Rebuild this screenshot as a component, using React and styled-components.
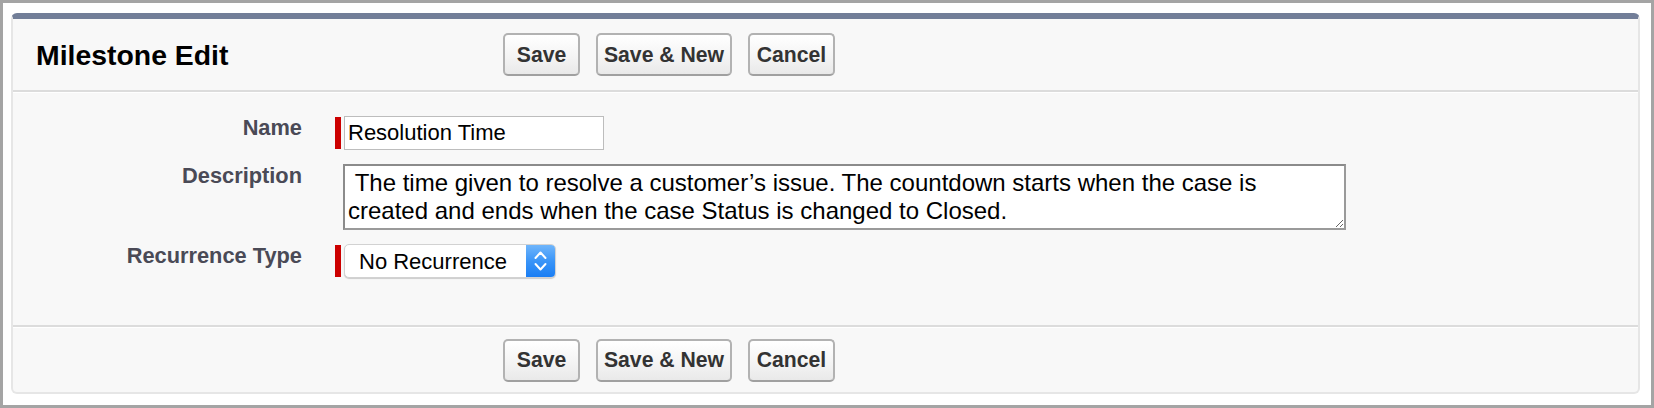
import React from "react";
import styled, { createGlobalStyle } from "styled-components";

const GlobalStyle = createGlobalStyle`
  html, body { margin: 0; padding: 0; background: #fff; }
  body { font-family: "Liberation Sans", Arial, sans-serif; }
  * { box-sizing: border-box; }
`;

const Frame = styled.div`
  width: 1654px;
  height: 408px;
  border: 3px solid #a4a4a4;
  background: #fff;
  padding: 10px 11px 11px 8px;
`;

const Panel = styled.div`
  display: flex;
  flex-direction: column;
  height: 381px;
  background: #f8f8f8;
  border-top: 6px solid #727e98;
  border-left: 2px solid #e6e6e6;
  border-right: 2px solid #e6e6e6;
  border-bottom: 2px solid #e6e6e6;
  border-radius: 6px;
`;

const Header = styled.div`
  display: flex;
  align-items: center;
  height: 73px;
  padding-left: 23px;
  border-bottom: 2px solid #dcdcdc;
`;

const Title = styled.h2`
  margin: 0;
  flex: 0 0 467px;
  font-size: 28.4px;
  font-weight: 700;
  color: #000;
  line-height: 32px;
`;

const ButtonBar = styled.div`
  display: flex;
  align-items: center;
  gap: 16px;
  margin-left: ${(p) => p.$offset || 0}px;
`;

const Button = styled.button`
  width: ${(p) => p.$w}px;
  height: 43px;
  padding: 0;
  border: 2px solid #b2b2b2;
  border-bottom-color: #a0a0a0;
  border-radius: 5px;
  background: linear-gradient(#ffffff, #f3f3f3 60%, #e9e9e9);
  font-family: "Liberation Sans", Arial, sans-serif;
  font-size: 21.2px;
  font-weight: 700;
  color: #333;
  cursor: pointer;
`;

const Body = styled.div`
  display: flex;
  flex-direction: column;
  gap: 14px;
  height: 235px;
  padding-top: 23px;
  border-top: 1px solid #fff;
  border-bottom: 2px solid #dcdcdc;
`;

const FieldRow = styled.div`
  display: flex;
  align-items: flex-start;
`;

const Label = styled.label`
  flex: 0 0 289px;
  font-size: 21.8px;
  font-weight: 700;
  line-height: 24px;
  color: #4a4a56;
  text-align: right;
`;

const Required = styled.span`
  flex: 0 0 6px;
  margin-left: 33px;
  margin-top: 1px;
  height: 32px;
  background: ${(p) => (p.$on ? "#cc0000" : "transparent")};
`;

const TextInput = styled.input`
  width: 260px;
  height: 34px;
  margin-left: 3px;
  padding: 0 3px;
  border: 1px solid #bdbdbd;
  background: #fff;
  font-family: "Liberation Sans", Arial, sans-serif;
  font-size: 22px;
  color: #000;
  outline: none;
`;

const TextArea = styled.textarea`
  width: 1003px;
  height: 66px;
  margin-left: 2px;
  padding: 3px;
  border: 2px solid #8b8b8b;
  border-bottom-color: #9a9a9a;
  border-right-color: #9a9a9a;
  background: #fff;
  font-family: "Liberation Sans", Arial, sans-serif;
  font-size: 24px;
  line-height: 28px;
  color: #000;
  outline: none;
  overflow: hidden;
`;

const SelectBox = styled.div`
  display: flex;
  width: 212px;
  height: 34px;
  margin-left: 3px;
  border-radius: 5px;
  border: 1px solid #d2d2d2;
  box-shadow: 0 1px 1px rgba(0, 0, 0, 0.18);
  background: #fff;
  overflow: hidden;
`;

const NativeSelect = styled.select`
  flex: 1;
  min-width: 0;
  appearance: none;
  -webkit-appearance: none;
  border: none;
  background: transparent;
  padding: 0 0 0 14px;
  font-family: "Liberation Sans", Arial, sans-serif;
  font-size: 22px;
  color: #000;
  outline: none;
`;

const SelectArrow = styled.span`
  display: flex;
  align-items: center;
  justify-content: center;
  width: 29px;
  background: linear-gradient(#6fb5fb, #3a95f8 50%, #1a7ef4);
`;

const Footer = styled.div`
  display: flex;
  align-items: center;
  height: 65px;
  border-top: 1px solid #fff;
`;

function Buttons({ offset }) {
  return (
    <ButtonBar $offset={offset}>
      <Button $w={77}>Save</Button>
      <Button $w={136}>Save &amp; New</Button>
      <Button $w={87}>Cancel</Button>
    </ButtonBar>
  );
}

function Chevrons() {
  return (
    <svg width="29" height="34" viewBox="0 0 29 34">
      <path
        d="M9.5 14 L14.5 8.5 L19.5 14"
        fill="none"
        stroke="#fff"
        strokeWidth="2"
        strokeLinecap="round"
        strokeLinejoin="round"
      />
      <path
        d="M9.5 20 L14.5 25.5 L19.5 20"
        fill="none"
        stroke="#fff"
        strokeWidth="2"
        strokeLinecap="round"
        strokeLinejoin="round"
      />
    </svg>
  );
}

export default function App() {
  return (
    <>
      <GlobalStyle />
      <Frame>
        <Panel>
          <Header>
            <Title>Milestone Edit</Title>
            <Buttons />
          </Header>
          <Body>
            <FieldRow>
              <Label>Name</Label>
              <Required $on />
              <TextInput defaultValue="Resolution Time" />
            </FieldRow>
            <FieldRow>
              <Label>Description</Label>
              <Required />
              <TextArea defaultValue=" The time given to resolve a customer’s issue. The countdown starts when the case is created and ends when the case Status is changed to Closed." />
            </FieldRow>
            <FieldRow>
              <Label>Recurrence Type</Label>
              <Required $on />
              <SelectBox>
                <NativeSelect defaultValue="none">
                  <option value="none">No Recurrence</option>
                  <option value="independent">Recurs Independently</option>
                  <option value="sequential">Recurs Sequentially</option>
                </NativeSelect>
                <SelectArrow>
                  <Chevrons />
                </SelectArrow>
              </SelectBox>
            </FieldRow>
          </Body>
          <Footer>
            <Buttons offset={490} />
          </Footer>
        </Panel>
      </Frame>
    </>
  );
}
